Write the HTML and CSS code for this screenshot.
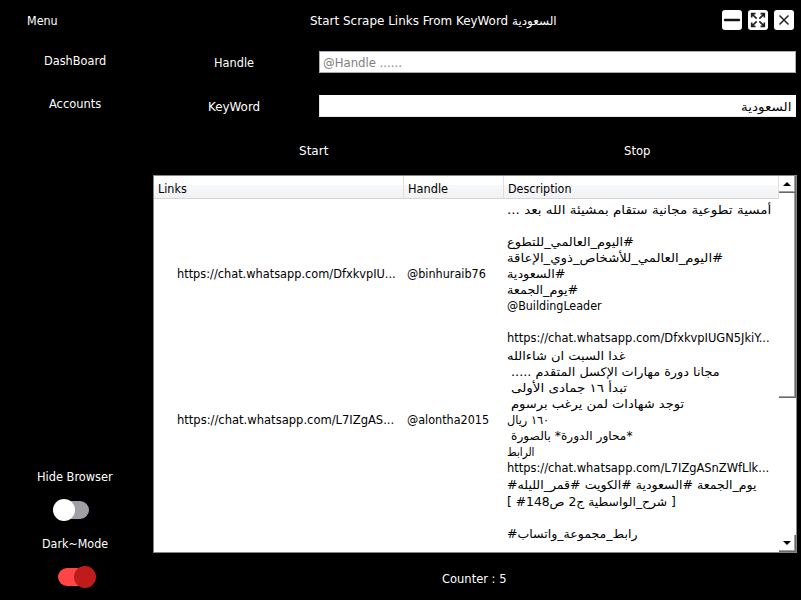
FILE: index.html
```html
<!DOCTYPE html>
<html lang="en">
<head>
<meta charset="utf-8">
<title>Scraper</title>
<link rel="stylesheet" href="styles.css">
</head>
<body>
<header class="titlebar">
  <div class="menu"><span class="fit" data-w="31">Menu</span></div>
  <div class="title"><span class="fit" data-w="247">Start Scrape Links From KeyWord السعودية</span></div>
  <div class="controls">
    <svg class="btn" viewBox="0 0 20 20"><path d="M3 10h14" stroke="#111" stroke-width="2.400" stroke-linecap="round"/></svg>
    <svg class="btn" viewBox="0 0 20 20"><path d="M8.700 8.700L4 4M11.300 8.700L16 4M8.700 11.300L4 16M11.300 11.300L16 16M3.700 7.500V3.700h3.800M12.500 3.700h3.800v3.800M3.700 12.500v3.800h3.800M12.500 16.300h3.800v-3.800" fill="none" stroke="#222" stroke-width="1.700"/></svg>
    <svg class="btn" viewBox="0 0 20 20"><path d="M5.500 5.500l9 9M14.500 5.500l-9 9" stroke="#222" stroke-width="1.500"/></svg>
  </div>
</header>
<div class="app">
  <aside class="sidebar">
    <nav class="nav">
      <div class="item"><span class="fit" data-w="62">DashBoard</span></div>
      <div class="item"><span class="fit" data-w="52">Accounts</span></div>
    </nav>
    <div class="settings">
      <div class="item"><span class="fit" data-w="76">Hide Browser</span></div>
      <div class="switch off"><i class="track"></i><i class="knob"></i></div>
      <div class="item"><span class="fit" data-w="66">Dark~Mode</span></div>
      <div class="switch on"><i class="track"></i><i class="knob"></i></div>
    </div>
  </aside>
  <main class="main">
    <div class="field"><label><span class="fit" data-w="40">Handle</span></label><div class="input hint"><span class="fit" data-w="79">@Handle ......</span></div></div>
    <div class="field"><label><span class="fit" data-w="52">KeyWord</span></label><div class="input value"><span class="fit" data-w="50">السعودية</span></div></div>
    <div class="actions"><div><span class="fit" data-w="29">Start</span></div><div><span class="fit" data-w="27">Stop</span></div></div>
    <div class="table">
      <div class="grid">
        <div class="head"><div><span class="fit" data-w="29">Links</span></div><div><span class="fit" data-w="40">Handle</span></div><div><span class="fit" data-w="64">Description</span></div></div>
        <div class="row first">
          <div class="link"><span class="fit" data-w="219">https://chat.whatsapp.com/DfxkvpIU...</span></div>
          <div class="handle"><span class="fit" data-w="79">@binhuraib76</span></div>
          <div class="desc">
            <p><span class="fit" dir="rtl" data-w="264">أمسية تطوعية مجانية ستقام بمشيئة الله بعد ...</span></p>
            <p></p>
            <p><span class="fit" dir="rtl" data-w="127">#اليوم_العالمي_للتطوع</span></p>
            <p><span class="fit" dir="rtl" data-w="216">#اليوم_العالمي_للأشخاص_ذوي_الإعاقة</span></p>
            <p><span class="fit" dir="rtl" data-w="58">#السعودية</span></p>
            <p><span class="fit" dir="rtl" data-w="71">#يوم_الجمعة</span></p>
            <p><span class="fit" data-w="95">@BuildingLeader</span></p>
            <p></p>
            <p><span class="fit" data-w="263">https://chat.whatsapp.com/DfxkvpIUGN5JkiY...</span></p>
          </div>
        </div>
        <div class="row second">
          <div class="link"><span class="fit" data-w="217">https://chat.whatsapp.com/L7IZgAS...</span></div>
          <div class="handle"><span class="fit" data-w="82">@alontha2015</span></div>
          <div class="desc">
            <p><span class="fit" dir="rtl" data-w="118">غدا السبت ان شاءالله</span></p>
            <p class="shift"><span class="fit" dir="rtl" data-w="209">مجانا دورة مهارات الإكسل المتقدم .....</span></p>
            <p class="shift"><span class="fit" dir="rtl" data-w="116">تبدأ ١٦ جمادى الأولى</span></p>
            <p class="shift"><span class="fit" dir="rtl" data-w="173">توجد شهادات لمن يرغب برسوم</span></p>
            <p><span class="fit" dir="rtl" data-w="42">١٦٠ ريال</span></p>
            <p class="shift"><span class="fit" dir="rtl" data-w="122">*محاور الدورة* بالصورة</span></p>
            <p><span class="fit" dir="rtl" data-w="28">الرابط</span></p>
            <p><span class="fit" data-w="262">https://chat.whatsapp.com/L7IZgASnZWfLlk...</span></p>
          </div>
        </div>
        <div class="row third">
          <div></div><div></div>
          <div class="desc">
            <p><span class="fit" data-w="250">#يوم_الجمعة #السعودية #الكويت #قمر_الليله</span></p>
            <p class="low"><span class="fit" data-w="169">[ <bdo dir="ltr">#148</bdo><bdi>شرح_الواسطية ج2 ص</bdi> ]</span></p>
            <p></p>
            <p class="low"><span class="fit" data-w="130">#رابط_مجموعة_واتساب</span></p>
          </div>
        </div>
      </div>
      <div class="scroll"><div class="up"><i></i></div><div class="thumb"></div><div class="down"><i></i></div></div>
    </div>
    <footer class="counter"><span class="fit" data-w="65">Counter : 5</span></footer>
  </main>
</div>
<script src="fit.js"></script>
</body>
</html>
```
FILE: styles.css
```css
* { box-sizing: border-box; }
body { margin: 0; width: 801px; height: 600px; overflow: hidden; background: #000; color: #fff; font: 12px/16px "DejaVu Sans Condensed", "DejaVu Sans", sans-serif; font-stretch: condensed; }
p { margin: 0; height: 16px; }
.fit { display: inline-block; white-space: pre; transform-origin: 0 50%; }
.titlebar { height: 40px; display: grid; grid-template-columns: 150px 1fr 85px; padding-top: 10px; }
.menu { padding: 3px 0 0 27px; }
.title { padding: 3px 0 0 160px; }
.controls { display: flex; gap: 6px; padding-left: 6px; }
.btn { width: 20px; height: 20px; background: #fff; border-radius: 3px; }
.app { display: grid; grid-template-columns: 153px 1fr; height: 560px; }
.sidebar { display: flex; flex-direction: column; justify-content: space-between; width: 150px; }
.item { text-align: center; height: 16px; }
.nav { padding-top: 13px; display: grid; gap: 27px; }
.settings { height: 131px; display: flex; flex-direction: column; align-items: center; }
.switch { width: 38px; height: 24px; margin: 13px 0 14px; flex: none; position: relative; }
.track { position: absolute; left: 2px; top: 3px; width: 34px; height: 18px; border-radius: 9px; }
.knob { position: absolute; width: 22px; height: 22px; border-radius: 50%; top: 1px; }
.off { right: 3px; }
.off .track { background: #a09fa5; }
.off .knob { left: 0; background: #fff; }
.on { left: 2px; }
.on .track { left: 0; background: #ff4545; }
.on .knob { right: 0; background: #bf1b1b; }
.main { display: flex; flex-direction: column; }
.field { height: 44px; display: grid; grid-template-columns: 162px 477px; padding-top: 11px; align-items: start; }
.field label { text-align: center; padding: 4px 0 0 1px; }
.input { height: 22px; margin-left: 4px; width: 477px; background: #fff; border: 1px solid #abadb3; padding: 3px 4px 0 3px; }
.hint { color: #808080; }
.value { color: #000; text-align: right; border-color: #fff #fff #e3e9ef #e2e3ea; }
.actions { height: 47px; display: grid; grid-template-columns: 321px 327px; text-align: center; padding-top: 15px; }
.table { height: 378px; width: 644px; display: flex; background: #fff; color: #000; border: 1px solid #828790; overflow: hidden; flex: none; }
.grid { width: 625px; flex: none; }
.head { height: 23px; display: grid; grid-template-columns: 250px 100px 275px; border-bottom: 1px solid #d5d5d5; background: linear-gradient(#fff 0 40%, #f7f8fa 41%, #f1f2f4); }
.head div { padding: 5px 0 0 4px; border-right: 1px solid #dedfe1; }
.row { display: grid; grid-template-columns: 250px 100px 275px; align-items: center; }
.first { height: 149px; }
.second { height: 128px; }
.link { padding-left: 23px; }
.handle { padding-left: 3px; }
.second .link, .second .handle { padding-top: 15px; }
.desc { padding-left: 3px; align-self: start; }
.first .desc { padding-top: 3px; }
.third .desc { padding-top: 1px; }
.shift { padding-left: 4px; }
.low { padding-top: 1px; }
.scroll { width: 17px; display: flex; flex-direction: column; }
.up, .down { height: 17px; display: grid; place-items: center; flex: none; border: solid #696969; border-width: 0 1px 1px 0; box-shadow: inset -1px -1px #a0a0a0; }
.up i { border: 4px solid transparent; border-top: 0; border-bottom-color: #000; }
.down i { border: 4px solid transparent; border-bottom: 0; border-top-color: #000; }
.thumb { height: 205px; border: solid #696969; border-width: 0 1px 1px 0; box-shadow: inset -1px -1px #a0a0a0; margin-bottom: auto; }
.counter { padding: 18px 0 0 289px; }
```
FILE: fit.js
```js
for (const el of document.querySelectorAll('.fit')) {
  const width = Number(el.dataset.w);
  const scale = width / el.offsetWidth;
  el.style.transform = `scaleX(${scale})`;
  el.style.marginRight = `${width - el.offsetWidth}px`;
}
```
